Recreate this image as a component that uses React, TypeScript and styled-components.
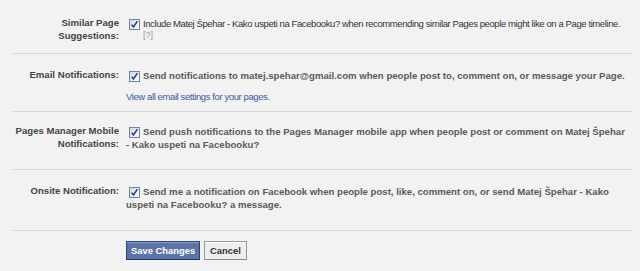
import { FC, ReactNode } from 'react'
import styled, { createGlobalStyle } from 'styled-components'

const GlobalStyle = createGlobalStyle`
  html, body {
    margin: 0;
    padding: 0;
    background: #f2f2f2;
  }
  body {
    font-family: 'Liberation Sans', Arial, sans-serif;
    font-size: 9.6px;
    color: #333;
  }
`

type Setting = {
  label: ReactNode
  text: ReactNode
  bold?: boolean
  extra?: ReactNode
  top: number
  bottom: number
}

const Checkbox: FC = () => (
  <Box>
    <svg width="9" height="9" viewBox="0 0 9 9">
      <path d="M1.6 4.6 L3.5 7 L7.4 1.2" fill="none" stroke="#21399a" strokeWidth="1.5" />
    </svg>
  </Box>
)

const App: FC = () => {
  const settings: Setting[] = [
    {
      label: (
        <>
          Similar Page
          <br />
          Suggestions:
        </>
      ),
      text: 'Include Matej Špehar - Kako uspeti na Facebooku? when recommending similar Pages people might like on a Page timeline.',
      extra: <Help>[?]</Help>,
      top: 14,
      bottom: 11
    },
    {
      label: 'Email Notifications:',
      text: 'Send notifications to matej.spehar@gmail.com when people post to, comment on, or message your Page.',
      bold: true,
      extra: <SubLink href="#">View all email settings for your pages.</SubLink>,
      top: 15,
      bottom: 8
    },
    {
      label: (
        <>
          Pages Manager Mobile
          <br />
          Notifications:
        </>
      ),
      text: 'Send push notifications to the Pages Manager mobile app when people post or comment on Matej Špehar - Kako uspeti na Facebooku?',
      bold: true,
      top: 13,
      bottom: 18
    },
    {
      label: 'Onsite Notification:',
      text: 'Send me a notification on Facebook when people post, like, comment on, or send Matej Špehar - Kako uspeti na Facebooku? a message.',
      bold: true,
      top: 15,
      bottom: 19
    }
  ]

  return (
    <>
      <GlobalStyle />
      <Page>
        {settings.map((s, i) => (
          <Row key={i} $top={s.top} $bottom={s.bottom}>
            <Label>{s.label}</Label>
            <Content>
              <CheckLine $bold={s.bold}>
                <Checkbox />
                {s.text}
              </CheckLine>
              {s.extra}
            </Content>
          </Row>
        ))}
        <Actions>
          <PrimaryButton>Save Changes</PrimaryButton>
          <CancelButton>Cancel</CancelButton>
        </Actions>
      </Page>
    </>
  )
}

const Page = styled.div`
  width: 620px;
  margin-left: 12px;
  padding-top: 3px;
`

const Row = styled.div<{ $top: number; $bottom: number }>`
  display: grid;
  grid-template-columns: 107px 1fr;
  column-gap: 7px;
  padding: ${(p) => p.$top}px 0 ${(p) => p.$bottom}px;
  border-bottom: 1px solid #d9d9d9;
`

const Label = styled.div`
  text-align: right;
  font-weight: bold;
  color: #444;
  line-height: 12.5px;
`

const Content = styled.div`
  display: flex;
  flex-direction: column;
  padding-right: 5px;
`

const CheckLine = styled.label<{ $bold?: boolean }>`
  display: block;
  line-height: 13px;
  font-weight: ${(p) => (p.$bold ? 'bold' : 'normal')};
  font-size: ${(p) => (p.$bold ? '9.6px' : '9.5px')};
  letter-spacing: ${(p) => (p.$bold ? '0' : '-0.4px')};
  color: ${(p) => (p.$bold ? '#5a5a5a' : '#333')};
`

const Box = styled.span`
  display: inline-flex;
  align-items: center;
  justify-content: center;
  box-sizing: border-box;
  width: 11px;
  height: 11px;
  border: 1px solid #6d86a8;
  background: linear-gradient(135deg, #d8d8d2 0%, #fff 100%);
  margin: 0 3px 0 3px;
  vertical-align: -2px;
`

const Help = styled.span`
  color: #9a9a9a;
  font-size: 9px;
  margin-left: 17px;
  line-height: 11px;
`

const SubLink = styled.a`
  color: #3b5998;
  text-decoration: none;
  font-size: 9.5px;
  letter-spacing: -0.4px;
  margin-top: 8px;
  line-height: 13px;
`

const Actions = styled.div`
  display: flex;
  gap: 4px;
  padding: 10px 0 0 114px;
`

const PrimaryButton = styled.button`
  font-family: inherit;
  font-size: 9.4px;
  font-weight: bold;
  color: #fff;
  background: #5b74a8;
  border: 1px solid #29447e;
  border-bottom-color: #1a356e;
  box-shadow: inset 0 1px 0 #8a9cc2;
  height: 19px;
  padding: 0 4px;
  cursor: pointer;
`

const CancelButton = styled.button`
  font-family: inherit;
  font-size: 9.4px;
  font-weight: bold;
  color: #333;
  background: #eee;
  border: 1px solid #999;
  border-bottom-color: #888;
  box-shadow: inset 0 1px 0 #fff;
  height: 19px;
  padding: 0 5px;
  cursor: pointer;
`

export default App
